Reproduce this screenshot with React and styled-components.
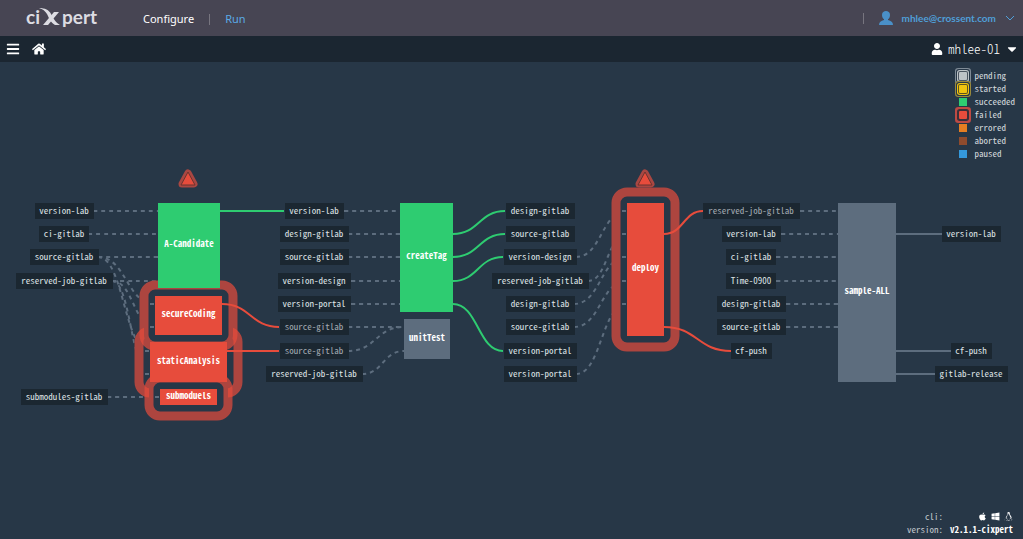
import React from "react";
import styled, { createGlobalStyle } from "styled-components";
import { FaApple, FaBars, FaCaretDown, FaHome, FaLinux, FaUser, FaWindows } from "react-icons/fa";

const RED = "#e74c3c";
const GREEN = "#2ecc71";
const GREY = "#5d6d7e";
const BACKGROUND = "#273747";

const rowY = (row) => Math.floor(211 + (row * 70) / 3);

// x is the centre of the column
const columns = [
  {
    x: 64,
    items: [
      [0, "version-lab"],
      [1, "ci-gitlab"],
      [2, "source-gitlab"],
      [3, "reserved-job-gitlab"],
      [8, "submodules-gitlab"],
    ],
  },
  {
    x: 314,
    items: [
      [0, "version-lab"],
      [1, "design-gitlab"],
      [2, "source-gitlab"],
      [3, "version-design"],
      [4, "version-portal"],
      [5, "source-gitlab", true],
      [6, "source-gitlab", true],
      [7, "reserved-job-gitlab"],
    ],
  },
  {
    x: 540,
    items: [
      [0, "design-gitlab"],
      [1, "source-gitlab"],
      [2, "version-design"],
      [3, "reserved-job-gitlab"],
      [4, "design-gitlab"],
      [5, "source-gitlab"],
      [6, "version-portal"],
      [7, "version-portal"],
    ],
  },
  {
    x: 751,
    items: [
      [0, "reserved-job-gitlab", true],
      [1, "version-lab"],
      [2, "ci-gitlab"],
      [3, "Time-0900"],
      [4, "design-gitlab"],
      [5, "source-gitlab"],
      [6, "cf-push"],
    ],
  },
  {
    x: 971,
    items: [
      [1, "version-lab"],
      [6, "cf-push"],
      [7, "gitlab-release"],
    ],
  },
];

const jobs = [
  { name: "staticAnalysis", x: 150, y: 342, w: 77, h: 40, color: RED, failed: true, stubs: [6, 7] },
  { name: "secureCoding", x: 155, y: 296, w: 67, h: 39, color: RED, failed: true, stubs: [4, 5] },
  { name: "submoduels", x: 160, y: 389, w: 57, h: 16, color: RED, failed: true, stubs: [8] },
  { name: "A-Candidate", x: 158, y: 203, w: 62, h: 85, color: GREEN },
  { name: "createTag", x: 400, y: 203, w: 53, h: 109, color: GREEN },
  { name: "unitTest", x: 404, y: 319, w: 46, h: 40, color: GREY },
  { name: "deploy", x: 627, y: 203, w: 37, h: 133, color: RED, failed: true, stubs: [0, 1, 2, 3, 4] },
  { name: "sample-ALL", x: 838, y: 203, w: 58, h: 179, color: GREY },
];

const failedJobs = jobs.filter((v) => v.failed);

// [x1, row1, x2, row2]
const inputs = [
  [93, 0, 158, 0],
  [88, 1, 158, 1],
  [98, 2, 158, 2],
  [98, 2, 155, 4],
  [98, 2, 150, 6],
  [112, 3, 158, 3],
  [112, 3, 155, 5],
  [112, 3, 150, 7],
  [107, 8, 160, 8],
  [344, 0, 400, 0],
  [348, 1, 400, 1],
  [348, 2, 400, 2],
  [351, 3, 400, 3],
  [351, 4, 400, 4],
  [348, 5, 404, 5],
  [348, 6, 404, 5],
  [362, 7, 404, 6],
  [576, 2, 627, 0],
  [588, 3, 627, 1],
  [574, 4, 627, 2],
  [574, 5, 627, 3],
  [576, 7, 627, 4],
  [800, 0, 838, 0],
  [781, 1, 838, 1],
  [776, 2, 838, 2],
  [776, 3, 838, 3],
  [786, 4, 838, 4],
  [786, 5, 838, 5],
];

const outputs = [
  [219, 0, 284, 0, GREEN],
  [222, 4, 279, 5, RED],
  [227, 6, 279, 6, RED],
  [453, 1, 505, 0, GREEN],
  [453, 2, 505, 1, GREEN],
  [453, 3, 503, 2, GREEN],
  [453, 4, 503, 6, GREEN],
  [664, 1, 703, 0, RED],
  [664, 5, 731, 6, RED],
  [896, 1, 942, 1, GREY],
  [896, 6, 951, 6, GREY],
  [896, 7, 935, 7, GREY],
];

const statuses = [
  { name: "pending", color: "#bdc3c7", shadow: "0 0 0 1px #4b5560, 0 0 0 2px #bdc3c7, 0 0 0 3px #273747, 0 0 0 4px #7f8b96" },
  { name: "started", color: "#f1c40f", shadow: "0 0 0 1px #5e5420, 0 0 0 2px #f1c40f, 0 0 0 3px #273747, 0 0 0 4px #9a8a3c" },
  { name: "succeeded", color: GREEN },
  { name: "failed", color: RED, shadow: "0 0 0 2px #3a2f38, 0 0 0 4px #bd4a44" },
  { name: "errored", color: "#e67e22" },
  { name: "aborted", color: "#8f4b2d" },
  { name: "paused", color: "#3498db" },
];

const curve = ([x1, r1, x2, r2]) => {
  const mid = (x1 + x2) / 2;
  return `M${x1} ${rowY(r1)} C${mid} ${rowY(r1)} ${mid} ${rowY(r2)} ${x2} ${rowY(r2)}`;
};

const ring = (v) => ({ x: v.x - 11, y: v.y - 11, width: v.w + 22, height: v.h + 22, rx: 11 });

const Logo = () => (
  <LogoLink href="#" aria-label="ciXpert">
    <span>ci</span>
    <svg width="22" height="18" viewBox="0 0 22 18" aria-hidden="true">
      <path d="M0 0 C6 0 10 2 12 6 C14 10 17 15 21 17 L16 17 C12 15 10 10 8 6 C6 3 4 1 0 0Z" />
      <path d="M20 4 L15 4 L4 17 L9 17Z" />
    </svg>
    <span>pert</span>
  </LogoLink>
);

const Pipeline = () => (
  <Graph viewBox="0 165 1023 260" role="img" aria-label="Pipeline">
    {inputs.map((v, i) => (
      <Edge key={i} d={curve(v)} $color={GREY} $dashed />
    ))}
    {failedJobs.map((v) => (
      <PulseBase key={v.name} {...ring(v)} />
    ))}
    {failedJobs.map((v) => (
      <React.Fragment key={v.name}>
        <Job x={v.x} y={v.y} width={v.w} height={v.h} $color={v.color} />
        <Pulse {...ring(v)} />
        {v.stubs.map((row) => (
          <Edge key={row} d={`M${v.x - 5} ${rowY(row)} H${v.x - 1}`} $color={GREY} />
        ))}
      </React.Fragment>
    ))}
    {outputs.map((v, i) => (
      <Edge key={i} d={curve(v)} $color={v[4]} />
    ))}
    {jobs.map((v) => (
      <a key={v.name} href={`#${v.name}`}>
        <Job x={v.x} y={v.y} width={v.w} height={v.h} $color={v.color} />
        <JobName x={v.x + v.w / 2} y={Math.floor(v.y + v.h / 2 + 2)}>
          {v.name}
        </JobName>
      </a>
    ))}
    {columns.map((column) =>
      column.items.map(([row, name, dim]) => {
        const width = Math.round((name.length * 14) / 3) + 8;
        return (
          <a key={`${column.x}-${row}`} href={`#${name}`}>
            <Resource x={Math.round(column.x - width / 2)} y={rowY(row) - 8} width={width} height="16" />
            <ResourceName x={column.x} y={rowY(row) + 3} $dim={dim}>
              {name}
            </ResourceName>
          </a>
        );
      })
    )}
    {[188, 645].map((x) => (
      <g key={x}>
        <path d={`M${x} 173 L${x + 6} 184 H${x - 6}Z`} fill="none" stroke="#a94742" strokeWidth="7" strokeLinejoin="round" />
        <path d={`M${x} 172 L${x + 7} 185 H${x - 7}Z`} fill={RED} stroke="#6b332f" strokeWidth="1" strokeLinejoin="round" />
      </g>
    ))}
  </Graph>
);

const App = () => {
  return (
    <Page>
      <GlobalStyle />
      <Header>
        <Logo />
        <Nav>
          <NavLink href="#configure">Configure</NavLink>
          <Divider />
          <NavLink href="#run" $active>
            Run
          </NavLink>
        </Nav>
        <Account>
          <Divider />
          <svg width="14" height="14" viewBox="0 0 14 14" aria-hidden="true">
            <path d="M7 0 C9 0 11 1 11 4 C11 6 10 8 9 8 V9 C12 10 14 11 14 14 H0 C0 11 2 10 5 9 V8 C4 8 3 6 3 4 C3 1 5 0 7 0Z" />
          </svg>
          <AccountButton>
            mhlee@crossent.com
            <svg width="10" height="6" viewBox="0 0 10 6" aria-hidden="true">
              <path d="M1 1 L5 5 L9 1" fill="none" stroke="currentColor" />
            </svg>
          </AccountButton>
        </Account>
      </Header>
      <Toolbar>
        <IconButton aria-label="Menu">
          <FaBars size={14} />
        </IconButton>
        <IconButton aria-label="Home">
          <FaHome size={14} />
        </IconButton>
        <UserButton>
          <FaUser size={12} />
          <span>mhlee-01</span>
          <FaCaretDown size={14} />
        </UserButton>
      </Toolbar>
      <Stage>
        <Pipeline />
        <Legend>
          {statuses.map((v) => (
            <li key={v.name}>
              <Swatch $color={v.color} $shadow={v.shadow} />
              {v.name}
            </li>
          ))}
        </Legend>
        <Info>
          <dt>cli:</dt>
          <dd>
            <a href="#darwin" aria-label="Mac"><FaApple size={9} /></a>
            <a href="#windows" aria-label="Windows"><FaWindows size={9} /></a>
            <a href="#linux" aria-label="Linux"><FaLinux size={9} /></a>
          </dd>
          <dt>version:</dt>
          <dd>v2.1.1-cixpert</dd>
        </Info>
      </Stage>
    </Page>
  );
};

const mono = `
  font-family: "Noto Sans CJK KR", "Liberation Mono", monospace;
  font-feature-settings: "hwid";
`;

const GlobalStyle = createGlobalStyle`
  * {
    box-sizing: border-box;
  }

  body {
    margin: 0;
    background: ${BACKGROUND};
  }

  a {
    color: inherit;
    text-decoration: none;
  }

  button {
    padding: 0;
    border: 0;
    background: none;
    color: inherit;
    font: inherit;
    cursor: pointer;
  }
`;

const Page = styled.div`
  display: flex;
  flex-direction: column;
  min-height: 100vh;
  color: #d5dade;
`;

const Header = styled.header`
  display: flex;
  align-items: center;
  height: 36px;
  padding: 0 8px 0 26px;
  background: #474553;
`;

const LogoLink = styled.a`
  display: flex;
  align-items: center;
  width: 117px;
  height: 36px;
  padding-bottom: 3px;
  font: 700 19px/20px Lato, sans-serif;
  color: #dcdce2;

  svg {
    margin: 0 1px 0 -1px;
    fill: #dcdce2;
  }
`;

const Nav = styled.nav`
  display: flex;
  align-items: center;
  gap: 15px;
  padding-top: 2px;
`;

const NavLink = styled.a`
  font: 11px/16px "Noto Sans", sans-serif;
  color: ${(p) => (p.$active ? "#5aaae6" : "#ffffff")};
`;

const Divider = styled.span`
  width: 1px;
  height: 11px;
  background: #77757f;
`;

const Account = styled.div`
  display: flex;
  align-items: center;
  margin-left: auto;
  color: #4f9fd8;

  > svg {
    margin: 0 9px 0 15px;
    fill: #4a90c8;
  }
`;

const AccountButton = styled.button`
  display: flex;
  align-items: center;
  gap: 9px;

  && {
    font: 700 10px/16px Lato, sans-serif;
  }
`;

const Toolbar = styled.div`
  display: flex;
  align-items: center;
  gap: 12px;
  height: 26px;
  padding: 0 6px;
  background: #1b2631;
`;

const IconButton = styled.button`
  display: flex;
  color: #ffffff;
`;

const UserButton = styled.button`
  display: flex;
  align-items: center;
  gap: 5px;
  margin-left: auto;
  color: #ffffff;

  span {
    ${mono}
    font-size: 13px;
    font-weight: 300;
    line-height: 20px;
  }

  svg:last-child {
    margin-right: -2px;
  }
`;

const Stage = styled.main`
  position: relative;
  flex: 1;
  padding: 103px 0;
`;

const Graph = styled.svg`
  display: block;
  width: 100%;
`;

const Edge = styled.path`
  fill: none;
  stroke: ${(p) => p.$color};
  stroke-width: 2px;
  stroke-dasharray: ${(p) => (p.$dashed ? "4 4" : "none")};
`;

const Job = styled.rect`
  fill: ${(p) => p.$color};
`;

const PulseBase = styled.rect`
  fill: ${BACKGROUND};
  stroke: ${BACKGROUND};
  stroke-width: 9px;
`;

const Pulse = styled.rect`
  fill: ${BACKGROUND};
  stroke: ${RED};
  stroke-width: 9px;
  stroke-opacity: 0.7;
`;

const Resource = styled.rect`
  fill: #1b2731;
`;

const ResourceName = styled.text`
  ${mono}
  font-size: 9px;
  text-anchor: middle;
  fill: ${(p) => (p.$dim ? "#a3abb1" : "#dfe3e6")};
`;

const JobName = styled.text`
  ${mono}
  font-size: 9px;
  font-weight: 700;
  text-anchor: middle;
  fill: #ffffff;
`;

const Legend = styled.ul`
  position: absolute;
  top: 7px;
  right: 8px;
  margin: 0;
  padding: 0;
  list-style: none;
  ${mono}
  font-size: 9px;
  line-height: 13px;

  li {
    display: flex;
    align-items: center;
    gap: 7px;
  }
`;

const Swatch = styled.span`
  width: 8px;
  height: 8px;
  background: ${(p) => p.$color};
  box-shadow: ${(p) => p.$shadow || "none"};
  border-radius: ${(p) => (p.$shadow ? "1px" : "0")};
`;

const Info = styled.dl`
  position: absolute;
  right: 10px;
  bottom: 3px;
  display: grid;
  grid-template-columns: auto auto;
  column-gap: 7px;
  margin: 0;
  ${mono}
  font-size: 9px;
  line-height: 13px;
  text-align: right;

  dt {
    color: #c3c9ce;
  }

  dd {
    display: flex;
    align-items: center;
    justify-content: flex-end;
    gap: 4px;
    margin: 0;
    color: #ffffff;
    font-weight: 700;
  }

  a {
    display: flex;
  }
`;

export default App;
